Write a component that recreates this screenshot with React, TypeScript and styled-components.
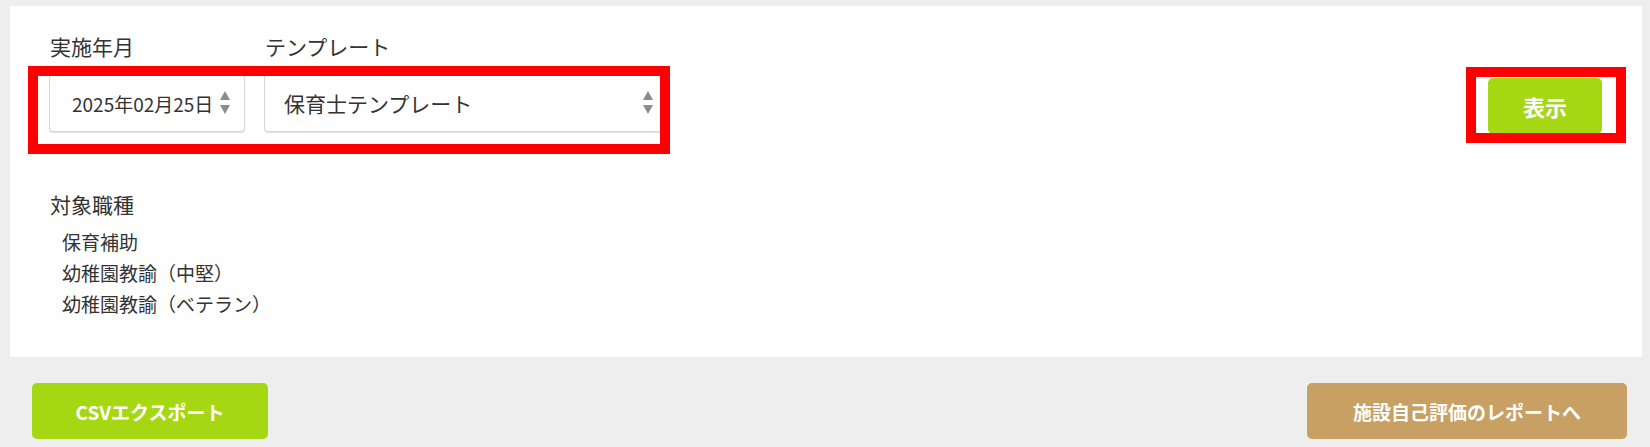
import styled, { createGlobalStyle } from 'styled-components';

const GlobalStyle = createGlobalStyle`
  html, body {
    margin: 0;
    padding: 0;
    background-color: #eeeeee;
    font-family: "Noto Sans CJK JP", "Noto Sans", sans-serif;
    color: #333333;
  }
`;

const Page = styled.div`
  position: relative;
  padding: 6px 8px 8px 10px;
  box-sizing: border-box;
  height: 447px;
`;

const Panel = styled.section`
  background-color: #ffffff;
  padding: 25px 40px 40px 39px;
  box-sizing: border-box;
  height: 351px;
`;

const FormRow = styled.div`
  display: flex;
  justify-content: space-between;
  align-items: flex-start;
`;

const Fields = styled.div`
  display: flex;
  gap: 19px;
`;

const Field = styled.div`
  display: flex;
  flex-direction: column;
`;

const Label = styled.div`
  font-size: 21px;
  line-height: 30px;
  padding-left: 1px;
  margin-bottom: 13px;
`;

const InputBox = styled.div<{ $width: number; $padLeft: number; $fontSize: number }>`
  display: flex;
  align-items: center;
  justify-content: space-between;
  width: ${({ $width }) => $width}px;
  height: 58px;
  box-sizing: border-box;
  padding: 0 14px 0 ${({ $padLeft }) => $padLeft}px;
  border: 1px solid #d6d6d6;
  border-radius: 4px;
  box-shadow: 0 1px 1px rgba(0, 0, 0, 0.12);
  font-size: ${({ $fontSize }) => $fontSize}px;
  color: #333333;
  background-color: #ffffff;
`;

const ShowButton = styled.button`
  margin-top: 47px;
  width: 114px;
  height: 56px;
  border: none;
  border-radius: 5px;
  background-color: #a6d713;
  color: #ffffff;
  font-family: inherit;
  font-size: 22px;
  font-weight: 700;
`;

const TargetSection = styled.div`
  margin-top: 55px;
`;

const TargetLabel = styled.div`
  font-size: 21px;
  line-height: 30px;
  padding-left: 1px;
  margin-bottom: 7px;
`;

const TargetList = styled.ul`
  list-style: none;
  margin: 0;
  padding: 0 0 0 13px;
`;

const TargetItem = styled.li`
  font-size: 19px;
  line-height: 31px;
`;

const Footer = styled.div`
  display: flex;
  justify-content: space-between;
  margin-top: 26px;
  padding: 0 15px 0 22px;
`;

const ActionButton = styled.button<{ $variant: 'green' | 'brown'; $width: number }>`
  width: ${({ $width }) => $width}px;
  height: 56px;
  border: none;
  border-radius: 5px;
  background-color: ${({ $variant }) => ($variant === 'green' ? '#a6d713' : '#c8a063')};
  color: #ffffff;
  font-family: inherit;
  font-size: 19px;
  font-weight: 700;
`;

const Highlight = styled.div<{ $left: number; $top: number; $width: number; $height: number }>`
  position: absolute;
  left: ${({ $left }) => $left}px;
  top: ${({ $top }) => $top}px;
  width: ${({ $width }) => $width}px;
  height: ${({ $height }) => $height}px;
  box-sizing: border-box;
  border: 10px solid #ff0000;
  pointer-events: none;
`;

function Spinner() {
  return (
    <svg width="10" height="24" viewBox="0 0 10 24">
      <polygon points="5,0 10,9 0,9" fill="#8c8c8c" />
      <polygon points="0,14 10,14 5,23" fill="#8c8c8c" />
    </svg>
  );
}

export default function App() {
  return (
    <>
      <GlobalStyle />
      <Page>
        <Panel>
          <FormRow>
            <Fields>
              <Field>
                <Label>実施年月</Label>
                <InputBox $width={196} $padLeft={22} $fontSize={19}>
                  <span>2025年02月25日</span>
                  <Spinner />
                </InputBox>
              </Field>
              <Field>
                <Label>テンプレート</Label>
                <InputBox $width={404} $padLeft={19} $fontSize={21}>
                  <span>保育士テンプレート</span>
                  <Spinner />
                </InputBox>
              </Field>
            </Fields>
            <ShowButton>表示</ShowButton>
          </FormRow>

          <TargetSection>
            <TargetLabel>対象職種</TargetLabel>
            <TargetList>
              <TargetItem>保育補助</TargetItem>
              <TargetItem>幼稚園教諭（中堅）</TargetItem>
              <TargetItem>幼稚園教諭（ベテラン）</TargetItem>
            </TargetList>
          </TargetSection>
        </Panel>

        <Footer>
          <ActionButton $variant="green" $width={236}>CSVエクスポート</ActionButton>
          <ActionButton $variant="brown" $width={320}>施設自己評価のレポートへ</ActionButton>
        </Footer>

        <Highlight $left={28} $top={66} $width={642} $height={88} />
        <Highlight $left={1466} $top={67} $width={160} $height={76} />
      </Page>
    </>
  );
}
